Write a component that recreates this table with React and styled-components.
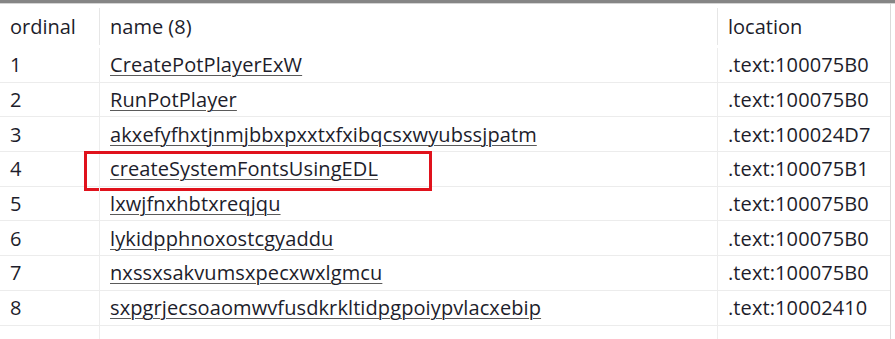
import React from 'react';
import styled, {createGlobalStyle} from 'styled-components';

const GlobalStyle = createGlobalStyle`
    html, body {
        margin: 0;
        padding: 0;
        background: #ffffff;
    }
    body {
        font-family: "Open Sans", "Noto Sans", "Liberation Sans", sans-serif;
        color: #1d1d2b;
    }
`;

const exportsList = [
    {ordinal: 1, name: 'CreatePotPlayerExW', location: '.text:100075B0'},
    {ordinal: 2, name: 'RunPotPlayer', location: '.text:100075B0'},
    {ordinal: 3, name: 'akxefyfhxtjnmjbbxpxxtxfxibqcsxwyubssjpatm', location: '.text:100024D7'},
    {ordinal: 4, name: 'createSystemFontsUsingEDL', location: '.text:100075B1', marked: true},
    {ordinal: 5, name: 'lxwjfnxhbtxreqjqu', location: '.text:100075B0'},
    {ordinal: 6, name: 'lykidpphnoxostcgyaddu', location: '.text:100075B0'},
    {ordinal: 7, name: 'nxssxsakvumsxpecxwxlgmcu', location: '.text:100075B0'},
    {ordinal: 8, name: 'sxpgrjecsoaomwvfusdkrkltidpgpoiypvlacxebip', location: '.text:10002410'},
];

function App() {
  return (
    <>
        <GlobalStyle />
        <Frame>
            <Table>
                <HeaderRow>
                    <HeadCell>ordinal</HeadCell>
                    <HeadCell divided>name (8)</HeadCell>
                    <HeadCell divided>location</HeadCell>
                </HeaderRow>
                {exportsList.map((item) => (
                    <Row key={item.ordinal}>
                        <Cell>{item.ordinal}</Cell>
                        <Cell divided>
                            <Link>{item.name}</Link>
                            {item.marked && <Highlight />}
                        </Cell>
                        <Cell divided>{item.location}</Cell>
                    </Row>
                ))}
                <Row>
                    <Cell />
                    <Cell divided />
                    <Cell divided />
                </Row>
            </Table>
        </Frame>
    </>
  )
}

const Frame = styled.div`
    width: 895px;
    height: 339px;
    overflow: hidden;
    box-sizing: border-box;
    border-top: 3px solid #858585;
    background: #ffffff;

    &::before{
        content: '';
        display: block;
        height: 1px;
        background: #d4d4d4;
    }
`

const Table = styled.div`
    width: 890px;
    border-right: 1px solid #dadada;
    min-height: 100%;
`

const columns = '99px 618px 173px';

const HeaderRow = styled.div`
    display: grid;
    grid-template-columns: ${columns};
    height: 44px;
`

const HeadCell = styled.div`
    display: flex;
    align-items: center;
    padding-left: 10px;
    font-size: 20px;
    color: #1d1d2b;
    border-left: ${p => p.divided ? '1px solid #e6e6e6' : 'none'};
    margin: 4px 0 3px;
`

const Row = styled.div`
    display: grid;
    grid-template-columns: ${columns};
    height: 34.7px;
    box-sizing: border-box;
    border-bottom: 1.5px solid #ececec;
`

const Cell = styled.div`
    position: relative;
    display: flex;
    align-items: center;
    padding-left: 10px;
    font-size: 20px;
    letter-spacing: 0.1px;
    white-space: nowrap;
    border-left: ${p => p.divided ? '1.5px solid #ededed' : 'none'};
`

const Link = styled.span`
    color: #1d1d2b;
    text-decoration: underline;
    text-decoration-color: #5a5a5a;
    text-underline-offset: 3px;
    text-decoration-thickness: 1px;
`

const Highlight = styled.div`
    position: absolute;
    left: -16px;
    top: -1px;
    width: 348px;
    height: 40px;
    box-sizing: border-box;
    border: 3px solid #e0121c;
`

export default App
